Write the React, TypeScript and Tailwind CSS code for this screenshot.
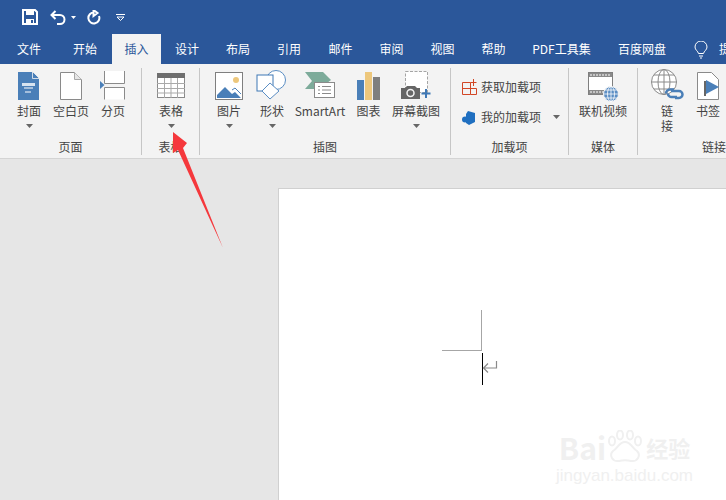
import React from "react";

const font = { fontFamily: '"Noto Sans CJK SC", "Liberation Sans", sans-serif' };

const tabs = [
  { label: "文件", w: "w-[58px]" },
  { label: "开始", w: "w-[54px]" },
  { label: "插入", w: "w-[49px]", active: true },
  { label: "设计", w: "w-[52px]" },
  { label: "布局", w: "w-[50px]" },
  { label: "引用", w: "w-[52px]" },
  { label: "邮件", w: "w-[51px]" },
  { label: "审阅", w: "w-[51px]" },
  { label: "视图", w: "w-[51px]" },
  { label: "帮助", w: "w-[51px]" },
  { label: "PDF工具集", w: "w-[85px]" },
  { label: "百度网盘", w: "w-[76px]" },
];

function Caret({ className = "" }: { className?: string }) {
  return (
    <svg width="7" height="4" viewBox="0 0 7 4" className={className}>
      <path d="M0 0h7L3.5 4z" fill="#666" />
    </svg>
  );
}

function BigButton({
  icon,
  label,
  width,
  caret,
}: {
  icon: React.ReactNode;
  label: string;
  width: string;
  caret?: boolean;
}) {
  return (
    <div className={`flex flex-col items-center shrink-0 ${width}`}>
      <div className="h-[32px] flex items-end justify-center">{icon}</div>
      <div className="text-[12px] leading-[20px] mt-[1px] text-[#444] whitespace-nowrap">{label}</div>
      {caret && <Caret className="mt-[3px]" />}
    </div>
  );
}

function Group({
  label,
  width,
  children,
  divider = true,
  labelClass = "justify-center",
}: {
  label: string;
  width: string;
  children: React.ReactNode;
  divider?: boolean;
  labelClass?: string;
}) {
  return (
    <div className={`shrink-0 h-[87px] flex flex-col ${width} ${divider ? "border-r border-[#c6c6c6]" : ""}`}>
      <div className="h-[71px] flex">{children}</div>
      <div className={`flex text-[12px] leading-[16px] text-[#444] whitespace-nowrap ${labelClass}`}>{label}</div>
    </div>
  );
}

const CoverIcon = (
  <svg width="22" height="29" viewBox="0 0 22 29">
    <path d="M0 1h14l7 7v21H0z" fill="#4a7fb8" />
    <path d="M14.5 0.5l7 7h-7z" fill="#4a7fb8" stroke="#f3f3f3" strokeWidth="0.8" />
    <path d="M4 12h13v3H4z" fill="#d7e3f0" />
    <path d="M6 17h9M7 21h6" stroke="#fff" strokeWidth="1" />
  </svg>
);

const BlankIcon = (
  <svg width="22" height="29" viewBox="0 0 22 29">
    <path d="M0.5 1.5h14l7 7v20H0.5z" fill="#fff" stroke="#8a8a8a" />
    <path d="M14.5 1.5v7h7" fill="#e6e6e6" stroke="#a8a8a8" />
  </svg>
);

const BreakIcon = (
  <svg width="26" height="29" viewBox="0 0 26 29">
    <path d="M4.5 0v12.500h20V0M4.500 28.500V16.500h20v12" fill="#fff" stroke="#8a8a8a" />
    <path d="M0 10l4.500 4L0 18z" fill="#4a7fb8" />
  </svg>
);

const TableIcon = (
  <svg width="28" height="25" viewBox="0 0 28 25" className="mb-[2px]">
    <rect x="0.5" y="0.500" width="27" height="24" fill="#fff" stroke="#8a8a8a" />
    <rect x="0" y="0" width="28" height="5" fill="#6e6e6e" />
    <path d="M0 10.500h28M0 15.500h28M0 20h28M7.500 5v20M14 5v20M20.500 5v20" stroke="#a9a9a9" />
  </svg>
);

const PictureIcon = (
  <svg width="28" height="28" viewBox="0 0 28 28">
    <rect x="0.500" y="0.500" width="27" height="27" fill="#fff" stroke="#7f7f7f" />
    <circle cx="21" cy="8" r="3" fill="#edc77c" />
    <path d="M2 26v-3l8-8 7 7 3-2 6 6z" fill="#4a7fb8" />
    <path d="M17 18l3-2 6 6" fill="none" stroke="#4a7fb8" />
  </svg>
);

const ShapeIcon = (
  <svg width="30" height="30" viewBox="0 0 30 30" className="-ml-[3px]">
    <circle cx="20" cy="10" r="9.500" fill="#fff" stroke="#5b8ec4" />
    <rect x="1" y="5" width="16" height="16" fill="#fff" stroke="#3f78b5" />
    <path d="M14 13l9 8-9 8-8-8z" fill="#fff" stroke="#5b8ec4" />
  </svg>
);

const SmartArtIcon = (
  <svg width="30" height="29" viewBox="0 0 30 29">
    <path d="M0 1h18l8 8-4 3H11v6H0l7-8z" fill="#7dab9a" />
    <rect x="9.500" y="11.500" width="20" height="15" fill="#fff" stroke="#8a8a8a" />
    <path d="M13 15.500h2M17 15.500h9M13 19h2M17 19h9M13 22.500h2M17 22.500h9" stroke="#8a8a8a" />
  </svg>
);

const ChartIcon = (
  <svg width="24" height="28" viewBox="0 0 24 28">
    <rect x="0" y="8" width="7" height="20" fill="#4a7fb8" />
    <rect x="8" y="0" width="7" height="28" fill="#edc77c" />
    <rect x="16" y="5" width="7" height="23" fill="#7f7f7f" />
  </svg>
);

const ScreenshotIcon = (
  <svg width="30" height="29" viewBox="0 0 30 29">
    <rect x="4.500" y="0.500" width="22" height="21" fill="#fff" stroke="#a5a5a5" strokeDasharray="3 1.500" />
    <path d="M0 28V17h4l2-2h8l2 2h3v11z" fill="#666" />
    <circle cx="9.500" cy="22" r="3.500" fill="#666" stroke="#f3f3f3" strokeWidth="1.500" />
    <path d="M25 18v9M20.500 22.500h9" stroke="#3f78b5" strokeWidth="2" />
  </svg>
);

const VideoIcon = (
  <svg width="31" height="30" viewBox="0 0 31 30" className="-mb-[2px]">
    <rect x="0.500" y="0.500" width="24" height="22" fill="#fff" stroke="#7f7f7f" />
    <path d="M1 1h23v4H1zM1 18h23v4H1z" fill="#8a8a8a" />
    <path d="M3 2v2M6 2v2M9 2v2M12 2v2M15 2v2M18 2v2M21 2v2M3 19v2M6 19v2M9 19v2M12 19v2M15 19v2M18 19v2M21 19v2" stroke="#fff" />
    <circle cx="23" cy="22" r="7.500" fill="#5b8ec4" stroke="#f3f3f3" />
    <path d="M15.500 22h15M23 14.500v15M17 18h12M17 26h12" stroke="#fff" strokeWidth="0.800" />
    <ellipse cx="23" cy="22" rx="3.500" ry="7.500" fill="none" stroke="#fff" strokeWidth="0.800" />
  </svg>
);

const LinkIcon = (
  <svg width="33" height="31" viewBox="0 0 33 31">
    <circle cx="13" cy="13" r="12.500" fill="#fff" stroke="#8a8a8a" />
    <ellipse cx="13" cy="13" rx="6" ry="12.500" fill="none" stroke="#8a8a8a" />
    <path d="M13 0.500v25M0.500 13h25M3 6h20M3 20h20" stroke="#8a8a8a" />
    <path d="M15 24.500a4 4 0 0 1 4-4h4M26 28h-5a3.500 3.500 0 0 1-4-3.500M20 22h8a3.500 3.500 0 0 1 0 7h-4" fill="none" stroke="#4a7fb8" strokeWidth="2.500" />
  </svg>
);

const BookmarkIcon = (
  <svg width="22" height="28" viewBox="0 0 22 28">
    <path d="M0.500 0.500h14l7 7v20H0.500z" fill="#fff" stroke="#8a8a8a" />
    <path d="M7 9h2v15H7z" fill="#666" />
    <path d="M9 8l13 7-13 7z" fill="#4a7fb8" />
  </svg>
);

export default function App() {
  return (
    <div className="relative w-[726px] h-[500px] overflow-hidden bg-[#e6e6e6]" style={font}>
      {/* title bar */}
      <div className="h-[34px] bg-[#2b579a] flex items-center text-white">
        <svg width="16" height="16" viewBox="0 0 16 16" className="ml-[22px]">
          <path d="M1 1h12l2 2v12H1z" fill="none" stroke="#fff" strokeWidth="2" />
          <path d="M4 1h8v5H4zM4 10h8v5H4z" fill="#fff" />
          <path d="M9 11h2v3H9z" fill="#2b579a" />
        </svg>
        <svg width="16" height="15" viewBox="0 0 16 15" className="ml-[12px]">
          <path d="M2 5h8a4.500 4.500 0 0 1 0 9H7M5.500 1L1.500 5l4 4" fill="none" stroke="#fff" strokeWidth="2" />
        </svg>
        <svg width="5" height="3" viewBox="0 0 5 3" className="ml-[5px]">
          <path d="M0 0h5L2.500 3z" fill="#fff" />
        </svg>
        <svg width="15" height="15" viewBox="0 0 15 15" className="ml-[10px]">
          <path d="M8 2.500a5.500 5.500 0 1 0 5 3.500M7.500 0v6l4-3z" fill="none" stroke="#fff" strokeWidth="2" />
        </svg>
        <svg width="9" height="7" viewBox="0 0 9 7" className="ml-[15px]">
          <path d="M0 0.500h9M1 3h7L4.500 6.500z" fill="none" stroke="#fff" />
        </svg>
      </div>

      {/* tabs */}
      <div className="h-[30px] bg-[#2b579a] flex items-stretch text-[12px] text-white whitespace-nowrap">
        {tabs.map((t) => (
          <div
            key={t.label}
            className={`shrink-0 flex items-center justify-center ${t.w} ${
              t.active ? "bg-[#f3f3f3] text-[#2b579a]" : ""
            }`}
          >
            {t.label}
          </div>
        ))}
        <svg width="14" height="18" viewBox="0 0 14 18" className="ml-[14px] mt-[7px] shrink-0">
          <path d="M4.500 12.500C4 10 1 9 1 6a6 6 0 0 1 12 0c0 3-3 4-3.500 6.500zM5 15h4M6 17h2" fill="none" stroke="#fff" />
        </svg>
        <span className="ml-[11px] flex items-center">提</span>
      </div>

      {/* ribbon */}
      <div className="h-[95px] bg-[#f3f3f3] border-b border-[#d4d4d4] flex pt-[4px]">
        <Group label="页面" width="w-[142px]">
          <div className="flex pl-[8px]">
            <BigButton icon={CoverIcon} label="封面" width="w-[42px]" caret />
            <BigButton icon={BlankIcon} label="空白页" width="w-[42px]" />
            <BigButton icon={BreakIcon} label="分页" width="w-[42px]" />
          </div>
        </Group>
        <Group label="表格" width="w-[58px]">
          <div className="w-full flex justify-center pl-[1px]">
            <BigButton icon={TableIcon} label="表格" width="w-[40px]" caret />
          </div>
        </Group>
        <Group label="插图" width="w-[251px]">
          <div className="flex pl-[8px]">
            <BigButton icon={PictureIcon} label="图片" width="w-[42px]" caret />
            <BigButton icon={ShapeIcon} label="形状" width="w-[44px]" caret />
            <BigButton icon={SmartArtIcon} label="SmartArt" width="w-[52px]" />
            <BigButton icon={ChartIcon} label="图表" width="w-[45px]" />
            <BigButton icon={ScreenshotIcon} label="屏幕截图" width="w-[50px]" caret />
          </div>
        </Group>
        <Group label="加载项" width="w-[118px]">
          <div className="flex flex-col pl-[11px] text-[12px] text-[#444]">
            <div className="flex items-center h-[20px] mt-[9px] gap-[4px]">
              <svg width="15" height="16" viewBox="0 0 15 16">
                <path d="M0.500 3.500h8v12h-8zM0.500 9.500h14v6h-6M11.500 0v7M8.500 3.500h6" fill="none" stroke="#d24726" />
              </svg>
              <span>获取加载项</span>
            </div>
            <div className="flex items-center h-[20px] mt-[10px] gap-[4px]">
              <svg width="15" height="15" viewBox="0 0 15 15">
                <path d="M6 1l7 2v9l-6 3-3-2V4z" fill="#1f6fc0" />
                <circle cx="3" cy="9.500" r="3" fill="#1f6fc0" />
              </svg>
              <span>我的加载项</span>
              <Caret className="ml-[8px]" />
            </div>
          </div>
        </Group>
        <Group label="媒体" width="w-[69px]">
          <div className="w-full flex justify-center">
            <BigButton icon={VideoIcon} label="联机视频" width="w-[52px]" />
          </div>
        </Group>
        <Group label="链接" width="w-[88px]" divider={false} labelClass="pl-[64px]">
          <div className="flex pl-[9px]">
            <div className="flex flex-col items-center w-[40px] shrink-0">
              <div className="h-[32px] flex items-end">{LinkIcon}</div>
              <div className="mt-[3px] text-[12px] text-center text-[#444]">
                <div className="h-[15px] leading-[15px]">链</div>
                <div className="h-[15px] leading-[15px]">接</div>
              </div>
            </div>
            <BigButton icon={BookmarkIcon} label="书签" width="w-[42px]" />
          </div>
        </Group>
      </div>

      {/* document area */}
      <div className="flex pl-[278px] pt-[29px]">
        <div className="relative w-[448px] h-[312px] bg-white border-t border-l border-[#d0d0d0]">
          <div className="absolute left-[163px] top-[121px] w-[40px] h-[41px] border-r border-b border-[#a6a6a6]" />
          <div className="absolute left-[203px] top-[164px] w-px h-[32px] bg-black" />
          <svg width="16" height="16" viewBox="0 0 16 16" className="absolute left-[203px] top-[171px]">
            <path d="M14.500 1v7H2M6 3.500L1.500 8 6 12.500" fill="none" stroke="#8a8a8a" strokeWidth="1.200" />
          </svg>
          <div className="absolute left-[277px] top-[241px] flex flex-col items-center text-[#f0f0f0] leading-none">
            <div className="flex items-center text-[30px] font-bold">
              <span>Bai</span>
              <svg width="38" height="34" viewBox="0 0 38 34">
                <path d="M19 12c-6 0-7 6-12 9-4 4-1 11 6 10 4-1 8-1 12 0 7 1 10-6 6-10-5-3-6-9-12-9z" fill="none" stroke="#f0f0f0" strokeWidth="2" />
                <ellipse cx="6" cy="11" rx="3" ry="4.500" fill="none" stroke="#f0f0f0" strokeWidth="2" />
                <ellipse cx="14" cy="5" rx="3" ry="4.500" fill="none" stroke="#f0f0f0" strokeWidth="2" />
                <ellipse cx="24" cy="5" rx="3" ry="4.500" fill="none" stroke="#f0f0f0" strokeWidth="2" />
                <ellipse cx="32" cy="11" rx="3" ry="4.500" fill="none" stroke="#f0f0f0" strokeWidth="2" />
              </svg>
              <span className="text-[22px] ml-[2px]">经验</span>
            </div>
            <div className="text-[17px] mt-[3px]" style={{ fontFamily: '"Liberation Sans", sans-serif' }}>
              jingyan.baidu.com
            </div>
          </div>
        </div>
      </div>

      {/* red arrow annotation */}
      <svg width="60" height="130" viewBox="0 0 60 130" className="absolute left-[170px] top-[125px]">
        <path d="M3 7L17 18l-4 5 40 100L8 25l-5 3z" fill="#f5383c" />
      </svg>
    </div>
  );
}
